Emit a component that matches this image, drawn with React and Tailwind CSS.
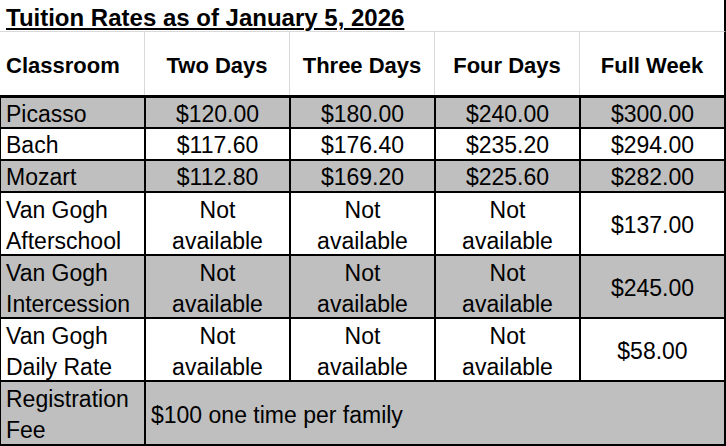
const headers = ["Classroom", "Two Days", "Three Days", "Four Days", "Full Week"]

const na = (
  <>
    Not
    <br />
    available
  </>
)

const rows = [
  { name: "Picasso", prices: ["$120.00", "$180.00", "$240.00", "$300.00"], shaded: true },
  { name: "Bach", prices: ["$117.60", "$176.40", "$235.20", "$294.00"] },
  { name: "Mozart", prices: ["$112.80", "$169.20", "$225.60", "$282.00"], shaded: true },
  { name: ["Van Gogh", "Afterschool"], prices: [na, na, na, "$137.00"], tall: true },
  { name: ["Van Gogh", "Intercession"], prices: [na, na, na, "$245.00"], tall: true, shaded: true },
  { name: ["Van Gogh", "Daily Rate"], prices: [na, na, na, "$58.00"], tall: true },
]

function Cell({ children, shaded, tall, left, className = "" }) {
  return (
    <div
      className={`flex items-center ${shaded ? "bg-[#bfbfbf]" : "bg-white"} ${
        tall ? "leading-[31px] pt-[4px]" : "leading-[28px] pt-[2px]"
      } ${left ? "justify-start pl-[5px] text-left" : "justify-center text-center"} ${className}`}
    >
      <div>{children}</div>
    </div>
  )
}

export default function App() {
  return (
    <div className="w-[726px] h-[446px] bg-white text-black font-['Liberation_Sans',Arial,sans-serif] overflow-hidden">
      {/* title */}
      <div className="h-[32px] border-b border-r-2 border-b-[#d9d9d9] border-r-black pl-[6px] pt-[6px]">
        <span className="text-[24px] leading-[24px] font-bold underline decoration-2 underline-offset-2">
          Tuition Rates as of January 5, 2026
        </span>
      </div>

      {/* header */}
      <div className="grid grid-cols-[145px_145px_145px_145px_146px] h-[66px] border-b-[3px] border-black">
        {headers.map((h, i) => (
          <div
            key={h}
            className={`flex items-center pt-1 text-[22px] font-bold ${
              i === 0 ? "justify-start pl-[6px]" : "justify-center"
            } ${i === 4 ? "border-r-2 border-black" : "border-r border-[#d9d9d9]"}`}
          >
            {h}
          </div>
        ))}
      </div>

      {/* rates */}
      <div className="grid grid-cols-[143px_143px_143px_143px_143px] grid-rows-[29px_30px_30px_61px_61px_61px_62px] gap-[2px] bg-black pl-[1px] pr-[2px] pb-[2px] text-[23px]">
        {rows.map((r, i) => (
          <div key={i} className="contents">
            <Cell shaded={r.shaded} tall={r.tall} left>
              {Array.isArray(r.name) ? (
                <>
                  {r.name[0]}
                  <br />
                  {r.name[1]}
                </>
              ) : (
                r.name
              )}
            </Cell>
            {r.prices.map((p, j) => (
              <Cell key={j} shaded={r.shaded} tall={r.tall}>
                {p}
              </Cell>
            ))}
          </div>
        ))}
        <Cell shaded tall left>
          Registration
          <br />
          Fee
        </Cell>
        <Cell shaded tall left className="col-span-4">
          $100 one time per family
        </Cell>
      </div>
    </div>
  )
}
